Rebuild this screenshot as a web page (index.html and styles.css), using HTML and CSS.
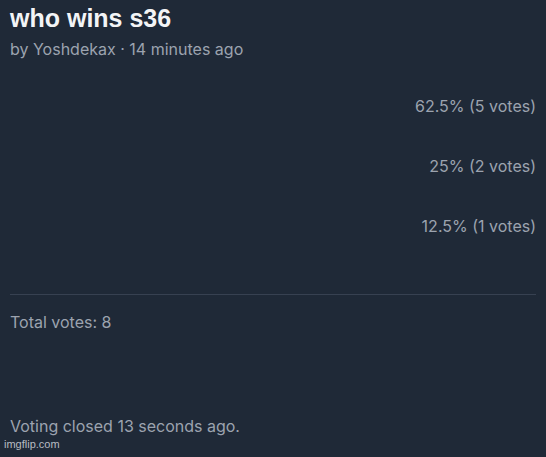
FILE: index.html
```html
<!DOCTYPE html>
<html lang="en">
<head>
  <meta charset="UTF-8">
  <title>who wins s36</title>
  <link rel="stylesheet" href="styles.css">
</head>
<body>
  <div class="poll">
    <h1 class="poll-title">who wins s36</h1>
    <div class="poll-meta">by Yoshdekax · 14 minutes ago</div>

    <div class="options">
      <div class="option">
        <div class="option-bar" style="width: 62.5%"></div>
        <div class="option-result">62.5% (5 votes)</div>
      </div>
      <div class="option">
        <div class="option-bar" style="width: 25%"></div>
        <div class="option-result">25% (2 votes)</div>
      </div>
      <div class="option">
        <div class="option-bar" style="width: 12.5%"></div>
        <div class="option-result">12.5% (1 votes)</div>
      </div>
    </div>

    <div class="poll-footer">
      <div class="total">Total votes: 8</div>
      <div class="closed">Voting closed 13 seconds ago.</div>
    </div>
  </div>
  <div class="watermark">imgflip.com</div>
</body>
</html>
```

FILE: styles.css
```css
* {
  box-sizing: border-box;
}

html, body {
  height: 100%;
}

body {
  margin: 0;
  background: #1f2937;
  font-family: Inter, 'Noto Sans', sans-serif;
  font-size: 16px;
  line-height: 24px;
  color: #9ca3af;
  position: relative;
}

.poll {
  padding: 2px 10px 0 10px;
}

.poll-title {
  margin: 0;
  font-family: 'Liberation Sans', Arial, sans-serif;
  font-size: 25px;
  line-height: 32px;
  font-weight: 700;
  color: #f3f4f6;
}

.poll-meta {
  margin-top: 3px;
}

.options {
  margin-top: 33px;
  display: flex;
  flex-direction: column;
  gap: 36px;
}

.option {
  position: relative;
  height: 24px;
  display: flex;
  justify-content: flex-end;
  align-items: center;
}

.option-bar {
  position: absolute;
  left: 0;
  top: 0;
  bottom: 0;
  background: #1f2937;
}

.option-result {
  position: relative;
}

.poll-footer {
  margin-top: 56px;
  border-top: 1px solid #374151;
  padding-top: 15px;
}

.closed {
  margin-top: 80px;
}

.watermark {
  position: absolute;
  left: 4px;
  bottom: 1px;
  font-family: 'Liberation Sans', Arial, sans-serif;
  font-size: 11px;
  color: #b8bcc2;
}
```
